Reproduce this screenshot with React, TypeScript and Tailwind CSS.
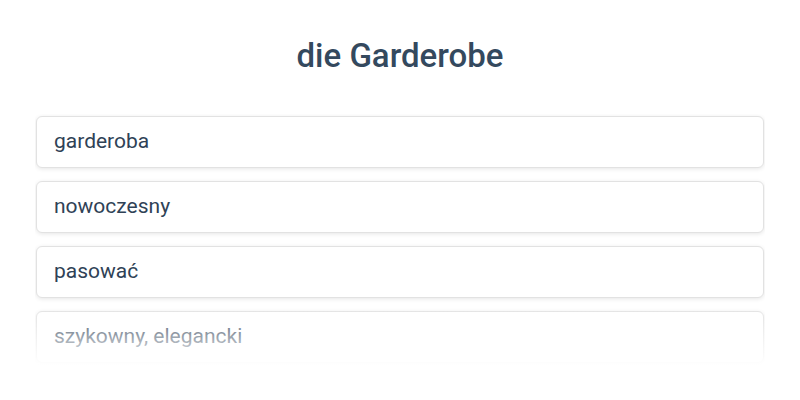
import React from "react";

const items = ["garderoba", "nowoczesny", "pasować", "szykowny, elegancki"];

export default function App() {
  return (
    <div
      className="w-[800px] h-[400px] bg-white overflow-hidden"
      style={{ fontFamily: "Roboto, 'Noto Sans', sans-serif" }}
    >
      <div className="flex flex-col items-center pt-[34px]">
        <h1 className="text-[33px] font-medium text-[#34495e] leading-[44px]">die Garderobe</h1>
      </div>
      <div className="relative mt-[36px] mx-[35px] h-[252px] overflow-hidden">
        <div className="flex flex-col gap-[13px] pt-[2px] px-[1px]">
          {items.map((t) => (
            <div
              key={t}
              className="h-[52px] flex items-center px-[17px] bg-white border border-[#e2e2e2] rounded-[6px] shadow-[0_1px_4px_rgba(0,0,0,0.1)] text-[21px] text-[#2f4256]"
            >
              {t}
            </div>
          ))}
        </div>
        <div className="absolute left-0 right-0 bottom-0 h-[60px] bg-gradient-to-b from-white/0 to-white pointer-events-none" />
      </div>
    </div>
  );
}
